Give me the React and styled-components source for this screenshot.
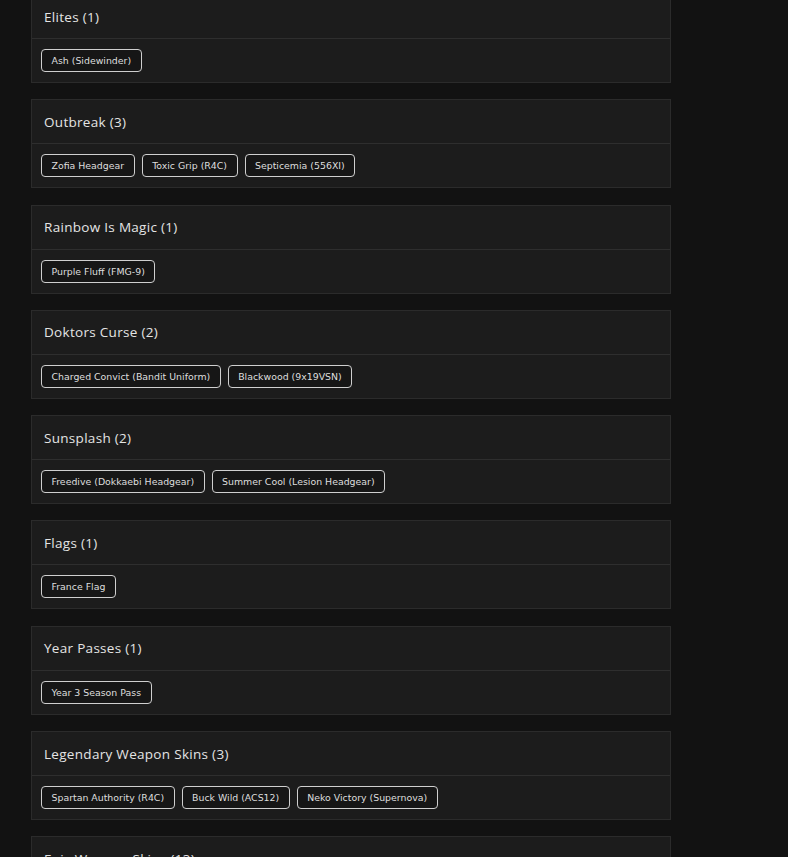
import React from 'react';
import styled, { createGlobalStyle } from 'styled-components';

const GlobalStyle = createGlobalStyle`
	html, body {
		margin: 0;
		padding: 0;
		background: #121212;
		font-family: 'DejaVu Sans', 'Open Sans', sans-serif;
		overflow: hidden;
	}
`;

const collections = [
	{ name: 'Elites', items: ['Ash (Sidewinder)'] },
	{ name: 'Outbreak', items: ['Zofia Headgear', 'Toxic Grip (R4C)', 'Septicemia (556XI)'] },
	{ name: 'Rainbow Is Magic', items: ['Purple Fluff (FMG-9)'] },
	{ name: 'Doktors Curse', items: ['Charged Convict (Bandit Uniform)', 'Blackwood (9x19VSN)'] },
	{ name: 'Sunsplash', items: ['Freedive (Dokkaebi Headgear)', 'Summer Cool (Lesion Headgear)'] },
	{ name: 'Flags', items: ['France Flag'] },
	{ name: 'Year Passes', items: ['Year 3 Season Pass'] },
	{ name: 'Legendary Weapon Skins', items: ['Spartan Authority (R4C)', 'Buck Wild (ACS12)', 'Neko Victory (Supernova)'] },
	{ name: 'Epic Weapon Skins', count: 13, items: ['Dust Line (L85A2)'] },
];

const Page = styled.div`
	height: 857px;
	overflow: hidden;
`;

const List = styled.div`
	width: 640px;
	margin: -6px 0 0 31px;
	display: flex;
	flex-direction: column;
	gap: 16.3px;
`;

const Card = styled.section`
	background: #1c1c1c;
	border: 1px solid #2b2b2b;
	box-sizing: border-box;
`;

const CardHeader = styled.div`
	height: 43px;
	display: flex;
	align-items: center;
	padding: 0 12px;
	border-bottom: 1px solid #2e2e2e;

	h3 {
		margin: 0;
		font-family: 'Open Sans', 'DejaVu Sans', sans-serif;
		font-size: 13.5px;
		font-weight: 500;
		color: #e4e4e4;
		letter-spacing: 0.3px;
	}
`;

const CardBody = styled.div`
	display: flex;
	flex-wrap: wrap;
	gap: 7px;
	padding: 10px 9px 10px;
`;

const Chip = styled.span`
	display: inline-flex;
	align-items: center;
	height: 23px;
	box-sizing: border-box;
	padding: 0 9.5px;
	border: 1px solid #cfcfcf;
	border-radius: 4px;
	background: #161616;
	color: #dedede;
	font-size: 9.4px;
	white-space: nowrap;
`;

const App = () => {
	return (
		<>
			<GlobalStyle />
			<Page>
				<List>
					{collections.map((c) => (
						<Card key={c.name}>
							<CardHeader>
								<h3>
									{c.name} ({c.count || c.items.length})
								</h3>
							</CardHeader>
							<CardBody>
								{c.items.map((item) => (
									<Chip key={item}>{item}</Chip>
								))}
							</CardBody>
						</Card>
					))}
				</List>
			</Page>
		</>
	);
};

export default App;
